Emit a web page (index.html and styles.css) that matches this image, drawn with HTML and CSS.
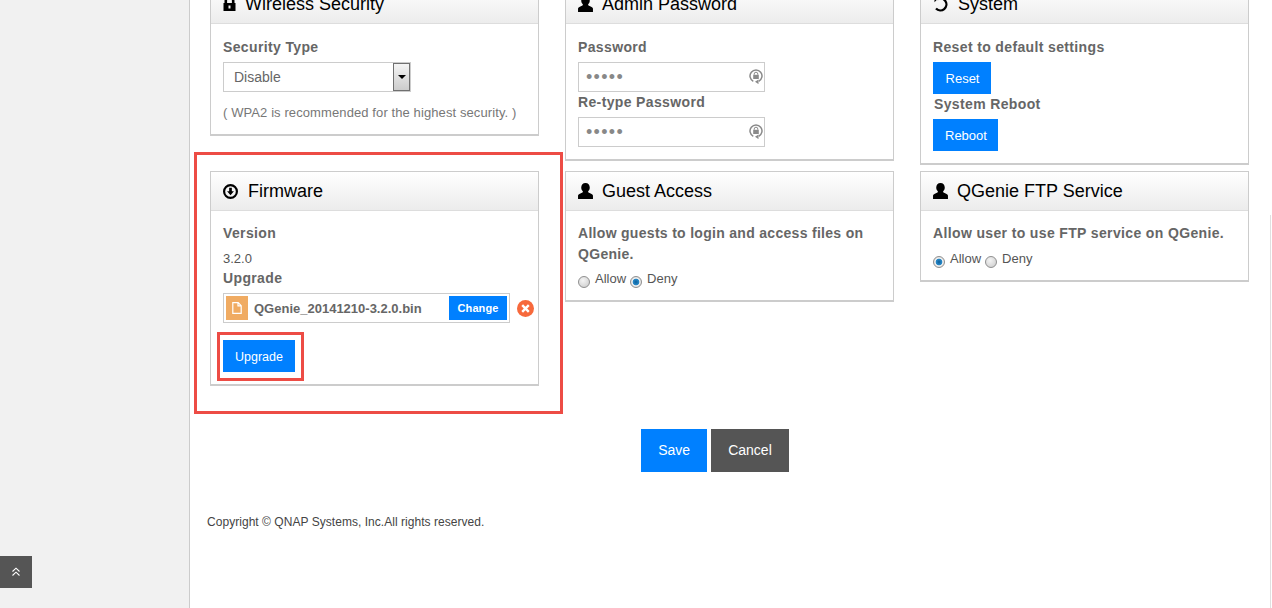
FILE: index.html
```html
<!DOCTYPE html>
<html lang="en">
<head>
<meta charset="utf-8">
<title>QGenie Settings</title>
<link rel="stylesheet" href="styles.css">
</head>
<body>
<div class="page">
  <aside class="sidebar">
    <a class="to-top" href="#" aria-label="Back to top">
      <svg width="10" height="10" viewBox="0 0 10 10" fill="none" stroke="#fff" stroke-width="1.1"><path d="M1.500 4.500 5 1.200l3.500 3.300M1.500 8.500 5 5.200l3.500 3.300"/></svg>
    </a>
  </aside>
  <main class="main">
    <div class="cards">
      <section class="card">
        <h2 class="card-head">
          <svg class="ico ico-lock" viewBox="2 0 12 16"><path d="M3 7V5a5 5 0 0 1 10 0v2h1v8H2V7zm2.600 0h4.800V5a2.400 2.400 0 0 0-4.800 0zM7 9.500v3h2v-3z" fill-rule="evenodd"/></svg>
          Wireless Security</h2>
        <div class="card-body wl">
          <div class="label">Security Type</div>
          <div class="select"><span class="select-val">Disable</span><span class="select-btn"><i></i></span></div>
          <p class="note">( WPA2 is recommended for the highest security. )</p>
        </div>
      </section>
      <section class="card">
        <h2 class="card-head">
          <svg class="ico ico-user" viewBox="1 1 14 15"><use href="#user"/></svg>
          Admin Password</h2>
        <div class="card-body pw">
          <div class="label">Password</div>
          <div class="pass"><input class="pass-in" type="password" value="admin" aria-label="Password"><svg class="pass-ico" viewBox="0 0 14 15"><use href="#relock"/></svg></div>
          <div class="label">Re-type Password</div>
          <div class="pass"><input class="pass-in" type="password" value="admin" aria-label="Re-type Password"><svg class="pass-ico" viewBox="0 0 14 15"><use href="#relock"/></svg></div>
        </div>
      </section>
      <section class="card">
        <h2 class="card-head">
          <svg class="ico" viewBox="0 0 16 16"><path class="ico-line" d="M4.200 3.300A6 6 0 1 1 3 12.500"/><path d="M1.500 .8h5.200L1.500 6.200z"/></svg>
          System</h2>
        <div class="card-body sys">
          <div class="label">Reset to default settings</div>
          <button class="btn btn-sm">Reset</button>
          <div class="label label-sys">System Reboot</div>
          <button class="btn btn-sm">Reboot</button>
        </div>
      </section>
      <section class="card">
        <h2 class="card-head">
          <svg class="ico ico-fw" viewBox=".8 .8 14.400 14.400"><path d="M8 .8a7.200 7.200 0 1 1 0 14.400A7.200 7.200 0 0 1 8 .8zm0 2.100a5.100 5.100 0 1 0 0 10.200A5.100 5.100 0 0 0 8 2.900zM6.700 4.500h2.600v3.300h2L8 11.500 4.700 7.800h2z" fill-rule="evenodd"/></svg>
          Firmware</h2>
        <div class="card-body fw">
          <div class="label">Version</div>
          <div class="version">3.2.0</div>
          <div class="label label-up">Upgrade</div>
          <div class="file-row">
            <div class="file">
              <span class="file-ico"><svg width="10" height="12" viewBox="0 0 10 12" fill="none" stroke="#fff" stroke-width="1.200"><path d="M.8.700h5.400l3 3v7.600H.8zM6 .8v3h3"/></svg></span>
              <span class="file-name">QGenie_20141210-3.2.0.bin</span>
              <span class="change">Change</span>
            </div>
            <span class="remove"><svg width="9" height="9" viewBox="0 0 9 9" stroke="#fff" stroke-width="2.400"><path d="M1.200 1.200l6.600 6.600M7.800 1.200 1.200 7.800"/></svg></span>
          </div>
          <button class="btn btn-up">Upgrade</button>
        </div>
      </section>
      <section class="card">
        <h2 class="card-head">
          <svg class="ico ico-user" viewBox="1 1 14 15"><use href="#user"/></svg>
          Guest Access</h2>
        <div class="card-body guest">
          <div class="label label-long">Allow guests to login and access files on QGenie.</div>
          <div class="radios"><input class="radio" type="radio" name="g" aria-label="Allow"><span>Allow</span><input class="radio" type="radio" name="g" checked aria-label="Deny"><span>Deny</span></div>
        </div>
      </section>
      <section class="card">
        <h2 class="card-head">
          <svg class="ico ico-user" viewBox="1 1 14 15"><use href="#user"/></svg>
          QGenie FTP Service</h2>
        <div class="card-body ftp">
          <div class="label">Allow user to use FTP service on QGenie.</div>
          <div class="radios radios-ftp"><input class="radio" type="radio" name="f" checked aria-label="Allow"><span>Allow</span><input class="radio" type="radio" name="f" aria-label="Deny"><span>Deny</span></div>
        </div>
      </section>
    </div>
    <div class="actions">
      <button class="btn btn-lg">Save</button>
      <button class="btn btn-lg btn-dark">Cancel</button>
    </div>
    <footer class="copy">Copyright © QNAP Systems, Inc.All rights reserved.</footer>
  </main>
</div>
<div class="mark mark-outer"></div>
<div class="mark mark-inner"></div>
<div class="edge"></div>
<svg class="defs" width="0" height="0" aria-hidden="true">
  <defs>
    <g id="user"><path d="M8 1c2.500 0 4 1.700 4 4.200 0 1.500-.6 2.800-1.500 3.600v.7c0 .5 1 .8 2.300 1.300 1.300.5 2.200 1 2.200 2.200V16H1v-3c0-1.200.9-1.700 2.200-2.200s2.300-.8 2.300-1.300v-.7C4.600 8 4 6.700 4 5.200 4 2.700 5.500 1 8 1z"/></g>
    <g id="relock"><path d="M4.300 12.300A6 6 0 1 1 9.700 12.300" fill="none" stroke="#8a8a8a" stroke-width="1.500"/><path d="M6 12.800l3.500-2.300v4.600z" fill="#8a8a8a"/><path d="M4.200 5.800h5.600v4.200H4.200z" fill="#8a8a8a"/><path d="M5.200 5.800V5a1.800 1.800 0 0 1 3.600 0v.8" fill="none" stroke="#8a8a8a"/></g>
  </defs>
</svg>
</body>
</html>
```
FILE: styles.css
```css
* { box-sizing: border-box; }
html, body { margin: 0; height: 608px; overflow: hidden; background: #fff; }
body { font-family: "Liberation Sans", Arial, sans-serif; color: #666; position: relative; }
.page { display: flex; height: 608px; }
.sidebar { width: 190px; flex: none; background: #f1f1f1; border-right: 1px solid #ccc; position: relative; }
.to-top { position: absolute; left: 0; top: 556px; width: 32px; height: 32px; background: #555; display: flex; align-items: center; justify-content: center; }
.main { flex: 1; padding: 0 0 0 20px; margin-top: -16px; }
.cards { display: grid; grid-template-columns: repeat(3, 329px); column-gap: 26px; row-gap: 6px; align-items: start; }
.card { border: 1px solid #ccc; border-bottom-width: 2px; background: #fff; }
.card-head { margin: 0; height: 39px; padding-left: 12px; display: flex; align-items: center; gap: 9px; font-size: 18px; font-weight: 400; color: #000; background: linear-gradient(#fff, #ececec); border-bottom: 1px solid #ddd; }
.ico { width: 16px; height: 16px; fill: #000; flex: none; }
.ico-lock { width: 13px; }
.ico-user { width: 15px; }
.ico-fw { width: 15px; height: 15px; margin-right: 1px; }
.ico-line { fill: none; stroke: #000; stroke-width: 2.300; }
.card-body { padding: 0 12px; }
.label { font-size: 14px; font-weight: 700; color: #666; line-height: 20px; letter-spacing: .36px; }
.wl, .pw, .sys { padding-top: 13px; }
.fw, .guest, .ftp { padding-top: 12px; }
.wl { height: 110px; }
.pw { height: 135px; }
.sys { height: 139px; }
.fw { height: 173px; }
.guest { height: 89px; }
.ftp { height: 69px; }
.select { width: 188px; height: 30px; margin-top: 5px; border: 1px solid #ccc; display: flex; justify-content: space-between; align-items: stretch; padding-left: 10px; font-size: 14px; color: #666; }
.select-val { line-height: 28px; }
.select-btn { width: 17px; height: 28px; border: 1px solid #707070; background: linear-gradient(#f4f4f4, #ccc); display: flex; align-items: center; justify-content: center; }
.select-btn i { border: 4px solid transparent; border-top: 4px solid #000; border-bottom: 0; }
.note { margin: 12px 0 0; font-size: 13px; line-height: 18px; color: #777; letter-spacing: .1px; }
.pass { width: 187px; height: 30px; margin-top: 5px; border: 1px solid #ccc; display: flex; align-items: center; position: relative; }
.pass-in { width: 160px; height: 26px; border: 0; outline: 0; padding: 0 0 0 7px; font-size: 18px; color: #888; background: transparent; font-family: "Liberation Sans", Arial, sans-serif; letter-spacing: 1.3px; }
.pass-ico { width: 14px; height: 15px; position: absolute; right: 1px; top: 6px; }
.btn { border: 0; border-radius: 0; background: #0080ff; color: #fff; font-family: "Liberation Sans", Arial, sans-serif; display: block; padding: 0; cursor: pointer; }
.btn-sm { height: 32px; margin-top: 5px; min-width: 58px; padding: 0 11px 0 12px; font-size: 13px; }
.label-sys { padding-left: 1px; }
.version { font-size: 13px; color: #555; line-height: 16px; margin-top: 8px; }
.label-up { margin-top: 1px; }
.file-row { display: flex; align-items: center; margin-top: 5px; gap: 7px; }
.file { width: 287px; height: 30px; border: 1px solid #ccc; display: flex; align-items: center; padding: 2px; flex: none; }
.file-ico { width: 22px; height: 24px; background: #f0ab62; display: flex; align-items: center; justify-content: center; flex: none; }
.file-name { flex: 1; padding-left: 6px; font-size: 13px; font-weight: 700; color: #666; white-space: nowrap; }
.change { width: 58px; height: 24px; background: #0080ff; color: #fff; font-size: 11px; font-weight: 700; display: flex; align-items: center; justify-content: center; flex: none; letter-spacing: .1px; }
.remove { width: 17px; height: 17px; border-radius: 50%; background: #f7693c; display: flex; align-items: center; justify-content: center; flex: none; }
.btn-up { width: 72px; height: 32px; margin-top: 17px; padding-top: 1px; font-size: 12.500px; }
.label-long { line-height: 21px; letter-spacing: .3px; }
.radios { display: flex; align-items: flex-start; height: 20px; margin-top: 5px; font-size: 13px; color: #555; line-height: 18px; }
.radios-ftp { margin-top: 7px; }
.radio { appearance: none; width: 12px; height: 12px; margin: 6px 5px 0 0; border-radius: 50%; border: 1px solid #8f8f8f; background: radial-gradient(circle at 40% 35%, #f4f4f4, #c9c9c9); flex: none; }
.radio:checked { background: radial-gradient(circle, #0a5f9c 0, #2a8ac8 3px, #f2f2f2 3.700px, #d4d4d4 6px); }
.radios span { margin-right: 4px; }
.actions { display: flex; justify-content: center; gap: 4px; margin-top: 43px; width: 1010px; }
.btn-lg { height: 43px; font-size: 14px; padding: 0 17px 1px; }
.btn-dark { background: #555; }
.copy { margin: 42px 0 0 -3px; font-size: 12px; line-height: 16px; color: #444; letter-spacing: .04px; }
.mark { position: absolute; border: 3px solid #ed4c45; pointer-events: none; }
.mark-outer { left: 194px; top: 152px; width: 369px; height: 262px; }
.mark-inner { left: 217px; top: 332px; width: 87px; height: 49px; }
.edge { position: absolute; left: 1270px; top: 215px; width: 1px; height: 393px; background: #e0e0e0; }
.defs { position: absolute; }
```
